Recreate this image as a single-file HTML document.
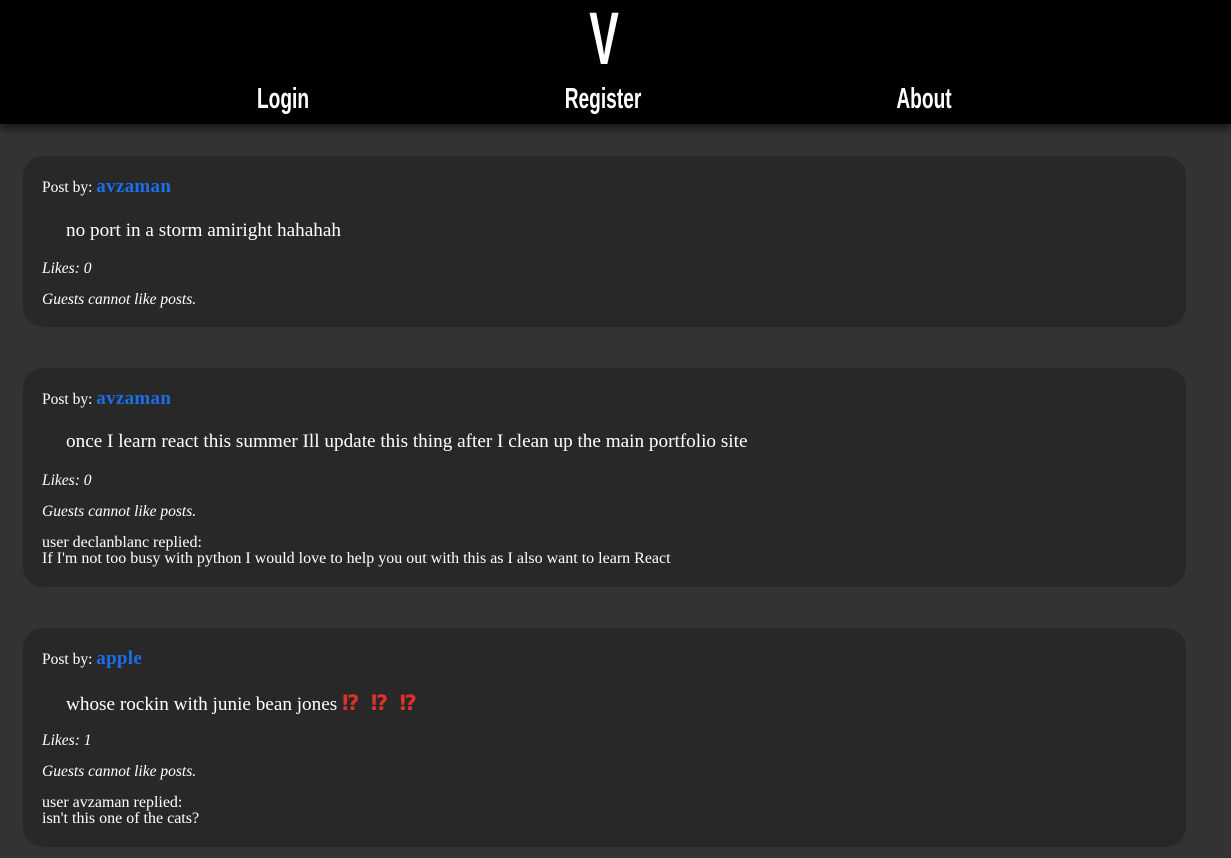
<!DOCTYPE html>
<html><head><meta charset="utf-8"><style>
body{margin:0;background:#333;font-family:"Liberation Serif",serif;color:#fff;width:1231px;height:858px;overflow:hidden}
.hdr{position:absolute;left:0;top:0;width:1231px;height:124px;background:#000;box-shadow:0 4px 8px rgba(0,0,0,.6)}
.hs{position:absolute;font-family:"Liberation Sans",sans-serif;font-weight:bold;color:#fff;white-space:nowrap;transform-origin:center top}
.card{position:absolute;left:23px;width:1163px;background:#282828;border-radius:20px}
.a{position:absolute;left:19px;font-size:15.5px;white-space:nowrap}
.u{color:#1a6fe8;font-weight:bold;font-size:19px;letter-spacing:.3px}
.c{position:absolute;left:43px;font-size:19.2px;white-space:nowrap}
.i{font-style:italic}
.r{font-size:16px}
.e{color:#e0302a;font-family:"DejaVu Sans",sans-serif;font-size:21px;font-weight:bold;letter-spacing:2px}
</style></head><body>
<div class="hdr">
<div class="hs" style="left:544px;width:120px;text-align:center;top:-4px;font-size:74px;transform:scaleX(.6)">V</div>
<div class="hs" style="left:223px;width:120px;text-align:center;top:83px;font-size:29px;transform:scaleX(.66)">Login</div>
<div class="hs" style="left:543px;width:120px;text-align:center;top:83px;font-size:29px;transform:scaleX(.66)">Register</div>
<div class="hs" style="left:864px;width:120px;text-align:center;top:83px;font-size:29px;transform:scaleX(.66)">About</div>
</div>

<div class="card" style="top:156px;height:171px">
<div class="a" style="top:20px">Post by: <span class="u">avzaman</span></div>
<div class="c" style="top:64px">no port in a storm amiright hahahah</div>
<div class="a i" style="top:104px">Likes: 0</div>
<div class="a i" style="top:135px">Guests cannot like posts.</div>
</div>

<div class="card" style="top:368px;height:219px">
<div class="a" style="top:20px">Post by: <span class="u">avzaman</span></div>
<div class="c" style="top:63px">once I learn react this summer Ill update this thing after I clean up the main portfolio site</div>
<div class="a i" style="top:104px">Likes: 0</div>
<div class="a i" style="top:135px">Guests cannot like posts.</div>
<div class="a r" style="top:167px;line-height:16px">user declanblanc replied:<br>If I'm not too busy with python I would love to help you out with this as I also want to learn React</div>
</div>

<div class="card" style="top:628px;height:219px">
<div class="a" style="top:20px">Post by: <span class="u">apple</span></div>
<div class="c" style="top:63px">whose rockin with junie bean jones <span class="e">⁉ ⁉ ⁉</span></div>
<div class="a i" style="top:104px">Likes: 1</div>
<div class="a i" style="top:135px">Guests cannot like posts.</div>
<div class="a r" style="top:167px;line-height:16px">user avzaman replied:<br>isn't this one of the cats?</div>
</div>
</body></html>
